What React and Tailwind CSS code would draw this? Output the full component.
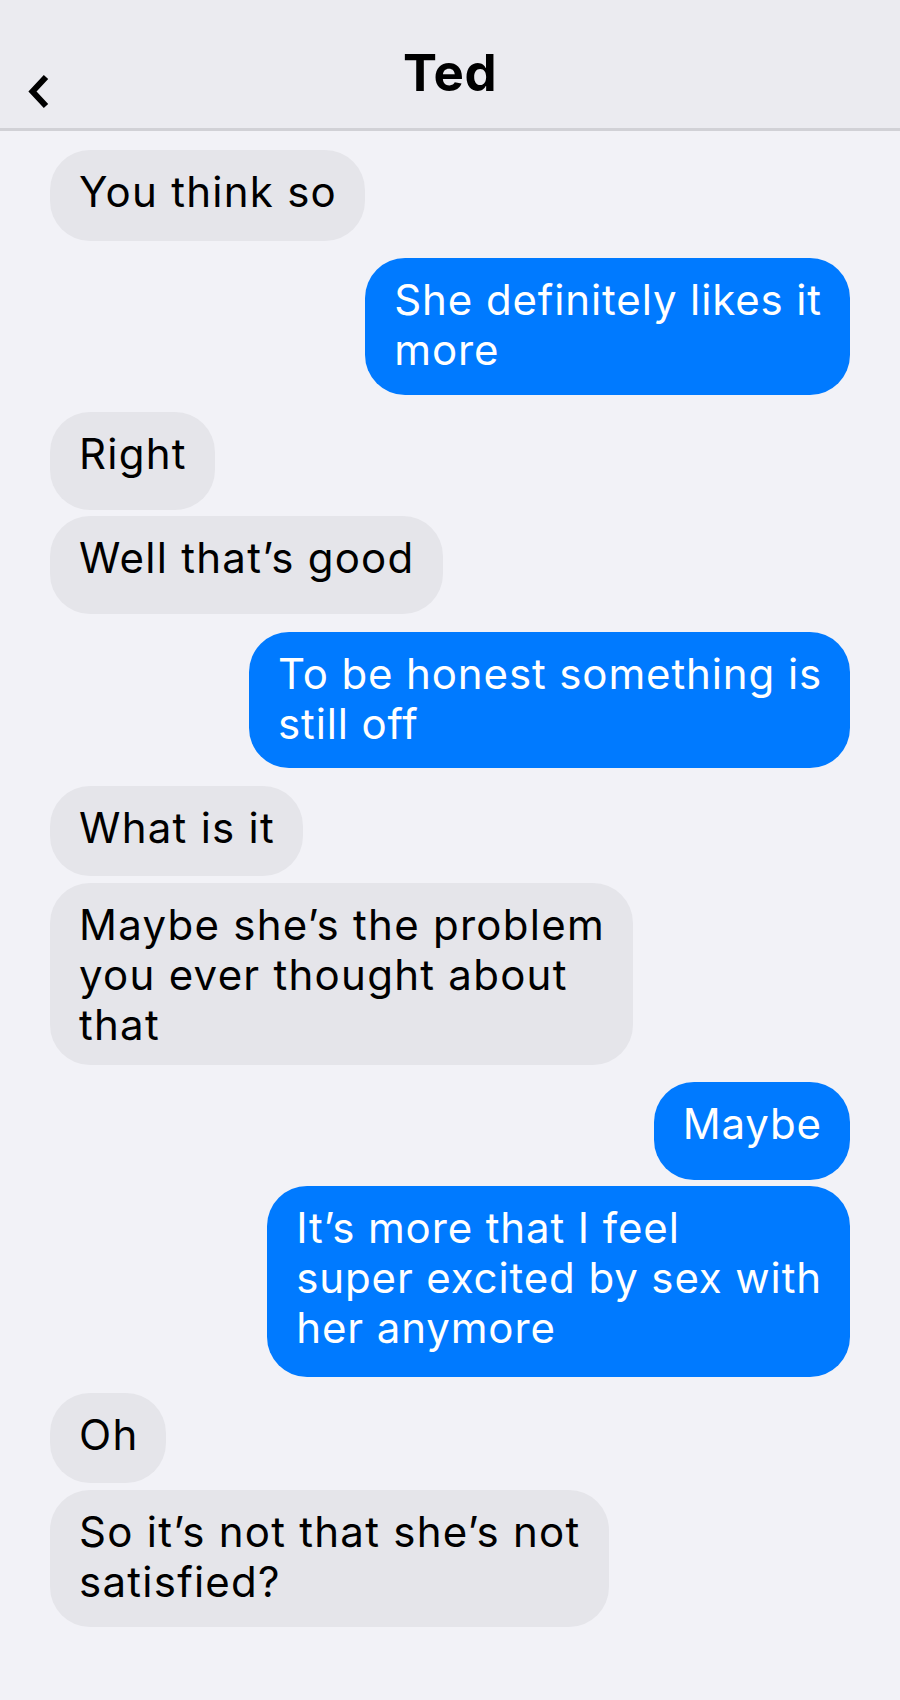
import React from 'react';

const messages = [
  { id: 1, me: false, lines: ['You think so'], gap: 'mt-0', pb: 'pb-[24px]' },
  { id: 2, me: true, lines: ['She definitely likes it', 'more'], gap: 'mt-[17px]', pb: 'pb-[20px]' },
  { id: 3, me: false, lines: ['Right'], gap: 'mt-[17px]', pb: 'pb-[31px]' },
  { id: 4, me: false, lines: ['Well that’s good'], gap: 'mt-[6px]', pb: 'pb-[31px]' },
  { id: 5, me: true, lines: ['To be honest something is', 'still off'], gap: 'mt-[18px]', pb: 'pb-[19px]' },
  { id: 6, me: false, lines: ['What is it'], gap: 'mt-[18px]', pb: 'pb-[23px]' },
  { id: 7, me: false, lines: ['Maybe she’s the problem', 'you ever thought about', 'that'], gap: 'mt-[7px]', pb: 'pb-[15px]' },
  { id: 8, me: true, lines: ['Maybe'], gap: 'mt-[17px]', pb: 'pb-[31px]' },
  { id: 9, me: true, lines: ['It’s more that I feel', 'super excited by sex with', 'her anymore'], gap: 'mt-[6px]', pb: 'pb-[24px]' },
  { id: 10, me: false, lines: ['Oh'], gap: 'mt-[16px]', pb: 'pb-[23px]' },
  { id: 11, me: false, lines: ['So it’s not that she’s not', 'satisfied?'], gap: 'mt-[7px]', pb: 'pb-[20px]' },
];

const Bubble = ({ msg }) => (
  <div className={`flex ${msg.me ? 'justify-end' : 'justify-start'} ${msg.gap}`}>
    <div
      className={`rounded-[40px] pl-[29px] pr-[28px] pt-[17px] ${msg.pb} text-[42px] leading-[50px] ${
        msg.me ? 'bg-[#007aff] text-white tracking-[0.021em]' : 'bg-[#e5e5ea] text-black tracking-[0.03em]'
      }`}
    >
      {msg.lines.map((line, i) => (
        <div key={i} className="whitespace-nowrap">{line}</div>
      ))}
    </div>
  </div>
);

const App = () => {
  return (
    <div className="min-h-[1700px] w-[900px] bg-[#f2f2f7]" style={{ fontFamily: 'Inter, "Noto Sans", sans-serif' }}>
      <header className="grid h-[131px] grid-cols-[1fr_auto_1fr] border-b-[3px] border-[#d1d1d6] bg-[#ebebf0]">
        <div className="flex items-start pl-[24px] pt-[72px]">
          <svg width="30" height="40" viewBox="0 0 30 40" fill="none">
            <polyline points="22,5 8.5,19.5 22,34" stroke="#000" strokeWidth="6" strokeLinejoin="miter" strokeLinecap="butt" />
          </svg>
        </div>
        <h1 className="pt-[43px] text-[51px] font-bold leading-[60px] tracking-[0.01em] text-black">Ted</h1>
        <div />
      </header>

      <main className="flex flex-col px-[50px] pt-[19px] pb-10">
        {messages.map((m) => (
          <Bubble key={m.id} msg={m} />
        ))}
      </main>
    </div>
  );
};

export default App;
